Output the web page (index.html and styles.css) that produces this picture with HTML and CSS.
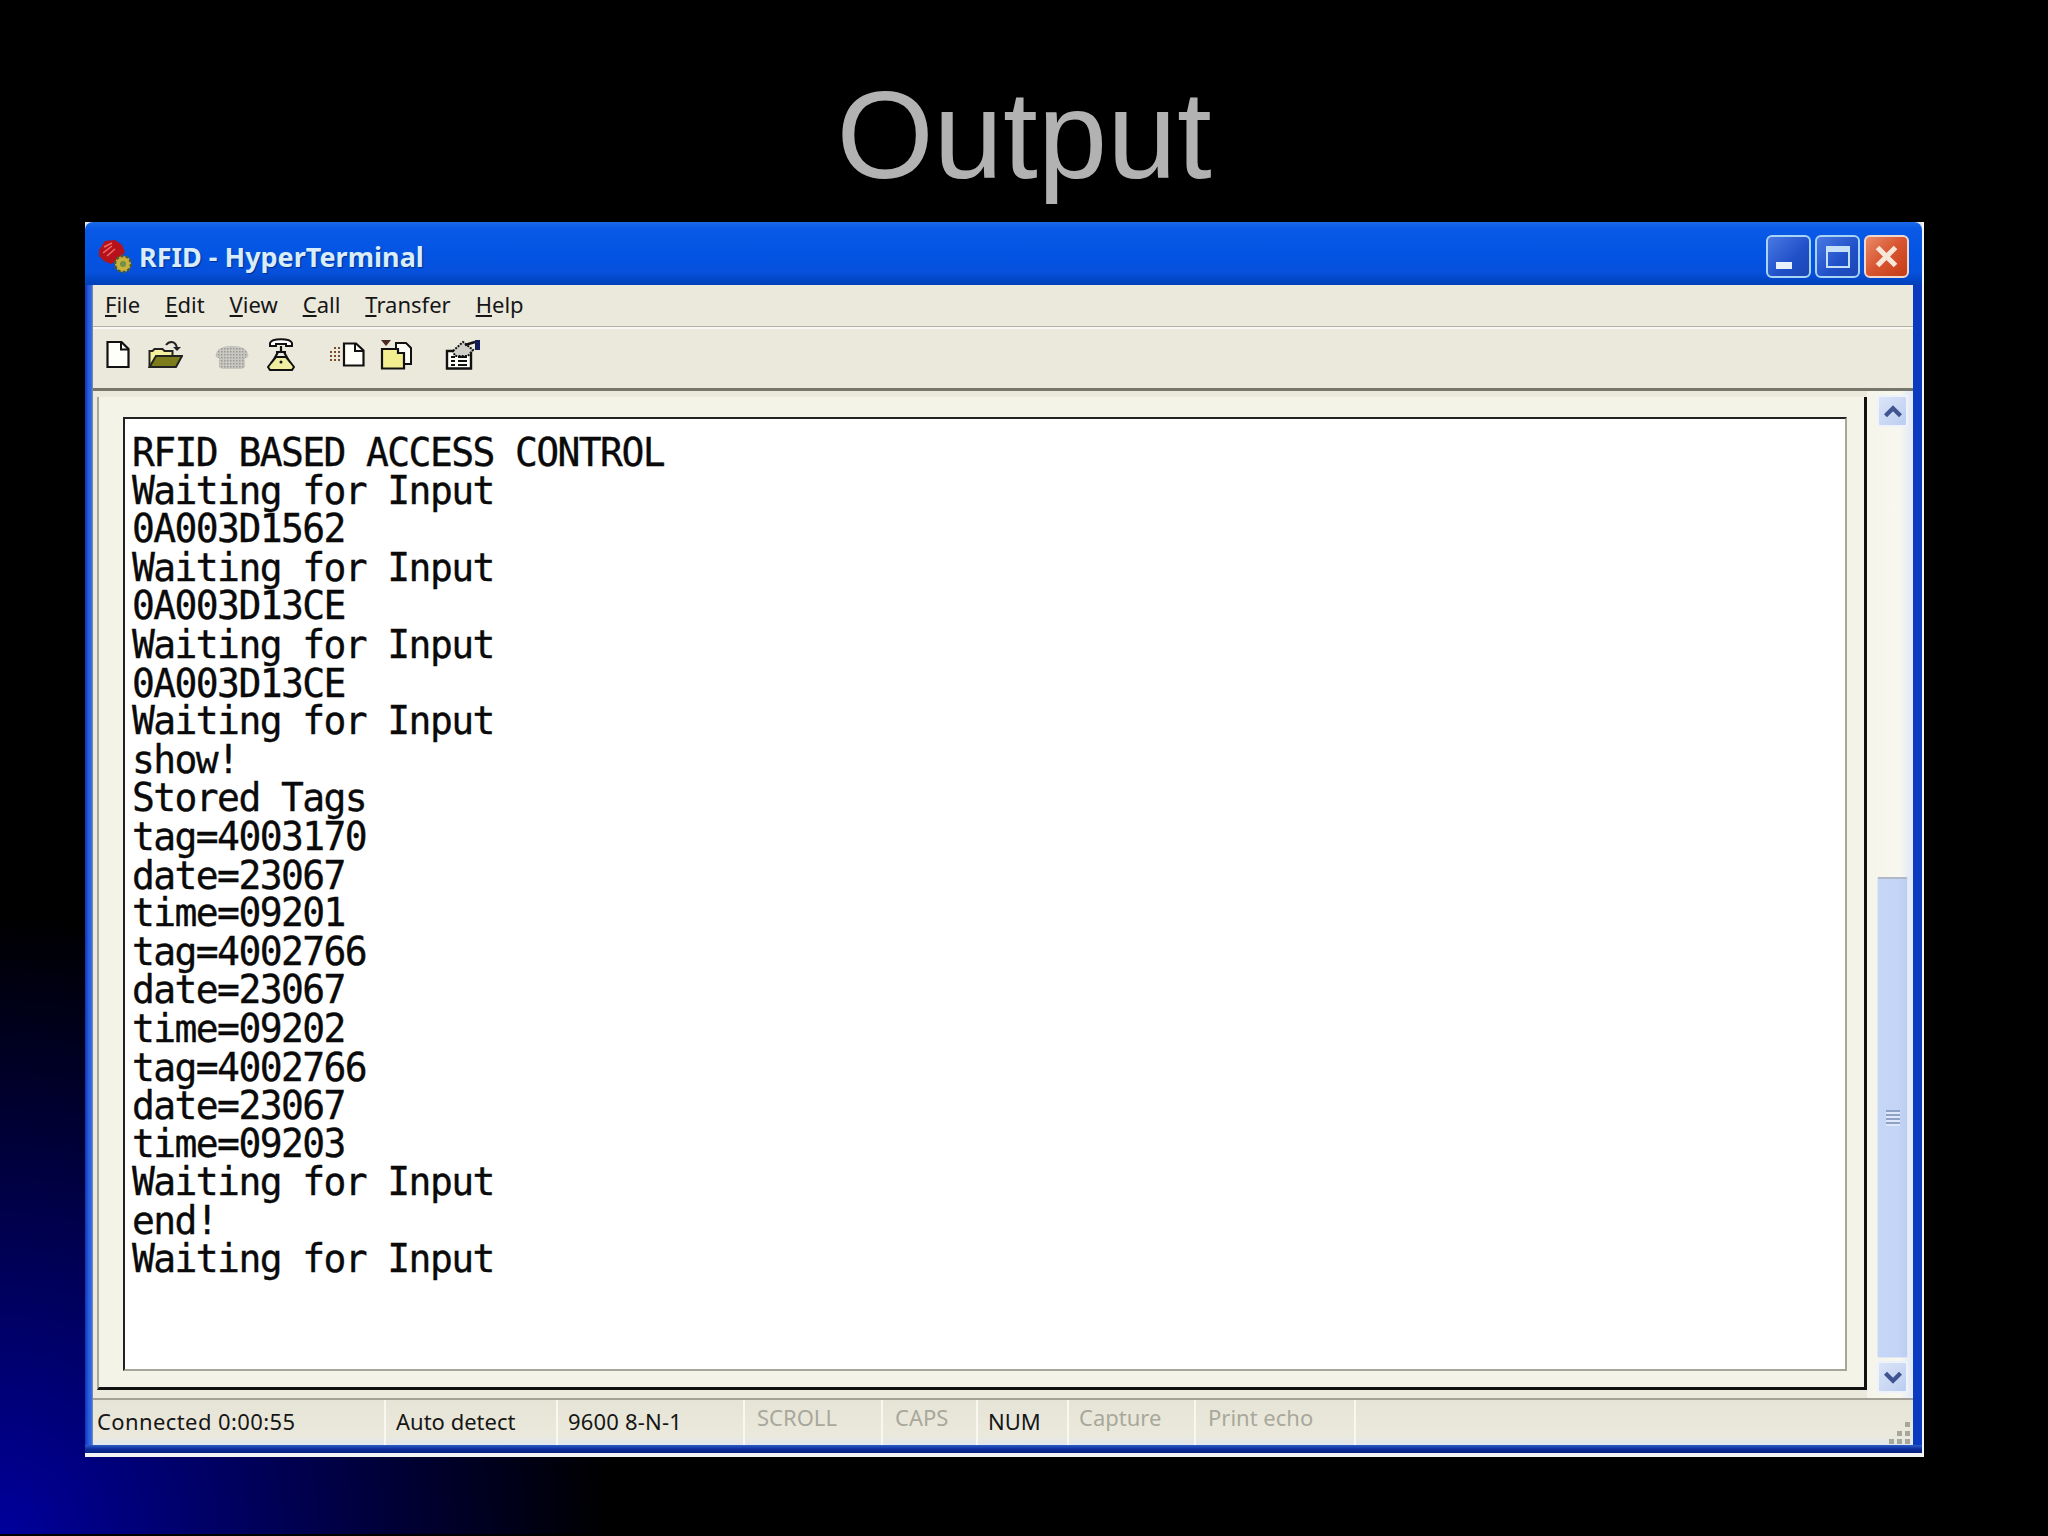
FILE: index.html
```html
<!DOCTYPE html>
<html lang="en">
<head>
<meta charset="utf-8">
<title>Output</title>
<link rel="stylesheet" href="styles.css">
</head>
<body>
<main class="slide">
  <h1 class="slide-title">Output</h1>
  <section class="window">
    <header class="titlebar">
      <svg class="app-icon" viewBox="0 0 36 36" aria-hidden="true">
        <path d="M1 11 7 2l10-1 7 5 3 7-6 7-8 5-7-3-5-5z" fill="#b5121b"/>
        <path d="M6 8l8-4M5 14l9-7M9 17l8-7" stroke="#f26a6a" stroke-width="1.5" fill="none"/>
        <circle cx="25" cy="25" r="8" fill="#c9b13a" stroke="#4a5a3a" stroke-width="2.5" stroke-dasharray="3 2"/>
        <circle cx="25" cy="25" r="3" fill="#6f8f4a"/>
      </svg>
      <span class="title-text">RFID - HyperTerminal</span>
      <div class="title-buttons">
        <div class="tbtn"><span class="glyph-min"></span></div>
        <div class="tbtn"><span class="glyph-max"></span></div>
        <div class="tbtn tbtn-close">
          <svg class="glyph-close" viewBox="0 0 24 24" aria-hidden="true"><path d="M4 4 20 20M20 4 4 20" stroke="#f8e6d8" stroke-width="4.5" fill="none"/></svg>
        </div>
      </div>
    </header>
    <div class="client">
      <nav class="menubar">
        <span><u>F</u>ile</span>
        <span><u>E</u>dit</span>
        <span><u>V</u>iew</span>
        <span><u>C</u>all</span>
        <span><u>T</u>ransfer</span>
        <span><u>H</u>elp</span>
      </nav>
      <div class="toolbar">
        <svg class="ti ti-new" viewBox="0 0 24 28" aria-hidden="true"><path d="M1.500 1.500h14l7 7v18h-21z" fill="#fffffa" stroke="#111" stroke-width="2.200"/><path d="M15 2v7h7" fill="none" stroke="#111" stroke-width="2"/></svg>
        <svg class="ti ti-open" viewBox="0 0 35 29" aria-hidden="true"><path d="M1.500 27V11h3l2-2h8l2 2h8v5" fill="#f4f0a0" stroke="#222" stroke-width="2"/><path d="M1.500 27 8 16h26l-6 11z" fill="#7c7c1c" stroke="#222" stroke-width="2"/><path d="M18 5c3-4 8-4 10 0l1 3" fill="none" stroke="#222" stroke-width="2"/><path d="m25 7 4 4 4-4z" fill="#222"/></svg>
        <svg class="ti ti-hang" viewBox="0 0 34 25" aria-hidden="true"><defs><pattern id="mesh" width="3" height="3" patternUnits="userSpaceOnUse"><rect width="3" height="3" fill="#c8c8c0"/><rect width="1.500" height="1.500" fill="#9a9a94"/></pattern></defs><path d="M1 9c1-5 6-8 16-8s15 3 16 8c1 3-1 4-3 4v9l-3 2H7l-3-2v-9c-2 0-4-1-3-4z" fill="url(#mesh)"/></svg>
        <svg class="ti ti-phone" viewBox="0 0 28 33" aria-hidden="true"><path d="M3 5c2-5 20-5 22 0v3h-6V6H9v2H3z" fill="#fff" stroke="#111" stroke-width="2"/><path d="M14 8v6M9 14h10M11 14 5 25M17 14l6 11" stroke="#111" stroke-width="2.200" fill="none"/><path d="M4 25 9 19h10l5 6 3 4-2 3H3l-2-3z" fill="#f0eca0" stroke="#111" stroke-width="2"/><circle cx="14" cy="24" r="1.500" fill="#111"/></svg>
        <svg class="ti ti-send" viewBox="0 0 36 25" aria-hidden="true"><path d="M1 9h2v2H1zm4 0h2v2H5zm4 0h2v2H9zm-8 4h2v2H1zm4 0h2v2H5zm4 0h2v2H9zm-8 4h2v2H1zm4 0h2v2H5zm4 0h2v2H9zM5 5h2v2H5zm4 0h2v2H9z" fill="#7a4a2a"/><path d="M15 1.500h12l7.500 7v15H15z" fill="#fffffa" stroke="#111" stroke-width="2.200"/><path d="M26 2v7h8" fill="none" stroke="#111" stroke-width="2"/></svg>
        <svg class="ti ti-recv" viewBox="0 0 33 30" aria-hidden="true"><path d="M16 3h10l5 5v16H16z" fill="#fffffa" stroke="#111" stroke-width="2"/><path d="M2 13V9h16v4h6v15.500H2z" fill="#f2ee90" stroke="#111" stroke-width="2.200"/><path d="m1 0 10 0-5 6z" fill="#4a2a20"/></svg>
        <svg class="ti ti-prop" viewBox="0 0 36 31" aria-hidden="true"><path d="M2 12h24v17.500H2z" fill="#fffffa" stroke="#111" stroke-width="2.400"/><path d="M8 12 18 3l10 8-5 6H10z" fill="#cfcfc8" stroke="#111" stroke-width="2" stroke-dasharray="2 1.200"/><path d="M20 6l10-3" stroke="#111" stroke-width="2.400"/><path d="M30 1h5v10h-5z" fill="#141a5a"/><path d="M6 18h4M13 18h9M6 22h4M13 22h9M6 26h4M13 26h9" stroke="#111" stroke-width="1.800"/></svg>
      </div>
      <div class="main">
        <div class="well">
          <div class="terminal"><pre class="screen">RFID BASED ACCESS CONTROL
Waiting for Input
0A003D1562
Waiting for Input
0A003D13CE
Waiting for Input
0A003D13CE
Waiting for Input
show!
Stored Tags
tag=4003170
date=23067
time=09201
tag=4002766
date=23067
time=09202
tag=4002766
date=23067
time=09203
Waiting for Input
end!
Waiting for Input</pre></div>
        </div>
        <aside class="scrollbar">
          <div class="sbtn">
            <svg class="chev" viewBox="0 0 20 14" aria-hidden="true"><path d="M3 11 10 4l7 7" fill="none" stroke="#3f5490" stroke-width="4"/></svg>
          </div>
          <div class="track">
            <div class="thumb"><span class="grip"></span></div>
          </div>
          <div class="sbtn">
            <svg class="chev" viewBox="0 0 20 14" aria-hidden="true"><path d="M3 3l7 7 7-7" fill="none" stroke="#3f5490" stroke-width="4"/></svg>
          </div>
        </aside>
      </div>
      <footer class="status">
        <div class="cell c-conn">Connected 0:00:55</div>
        <div class="cell c-auto">Auto detect</div>
        <div class="cell c-baud">9600 8-N-1</div>
        <div class="cell c-scroll off">SCROLL</div>
        <div class="cell c-caps off">CAPS</div>
        <div class="cell c-num">NUM</div>
        <div class="cell c-cap off">Capture</div>
        <div class="cell c-print off">Print echo</div>
        <div class="cell c-rest">
          <svg class="sizegrip" viewBox="0 0 24 24" aria-hidden="true"><path d="M18 2h5v5h-5zM10 11h5v5h-5zM18 11h5v5h-5zM2 19h5v5H2zM10 19h5v5h-5zM18 19h5v5h-5z" fill="#a8a89a"/></svg>
        </div>
      </footer>
    </div>
  </section>
</main>
</body>
</html>
```

FILE: styles.css
```css
* { box-sizing: border-box; }
html, body { margin: 0; padding: 0; background: #000; }
.slide {
  width: 2048px;
  height: 1536px;
  overflow: hidden;
  background:
    linear-gradient(#000, #000) left bottom / 100% 2px no-repeat,
    radial-gradient(ellipse 610px 620px at 0 1536px, #00009c 0%, #000 100%);
}
.slide-title {
  margin: 0;
  height: 222px;
  padding-top: 60px;
  text-align: center;
  font: 400 125px/150px "Liberation Sans", Arial, sans-serif;
  color: #b2b2b2;
}
.window {
  width: 1839px;
  height: 1235px;
  margin-left: 85px;
  display: flex;
  flex-direction: column;
  background:
    linear-gradient(#dfe6ee, #dfe6ee) left top / 8px 8px no-repeat,
    linear-gradient(#dfe6ee, #dfe6ee) right top / 8px 8px no-repeat,
    linear-gradient(180deg, #2c5cc8 0, #0c2e9c 50%, #062080 100%) left bottom / 100% 8px no-repeat,
    linear-gradient(90deg, #0c34b0 0, #2a60e4 4px, #2a60e4 6px, #8890a8 8px, #0a3ac0 8px);
  border-right: 2px solid #f4f4f4;
  border-bottom: 4px solid #f4f4f4;
  padding: 0 9px 8px 8px;
}
.titlebar {
  height: 63px;
  margin: 0 -9px 0 -8px;
  padding: 6px 13px 0 13px;
  display: flex;
  align-items: center;
  border-radius: 8px 8px 0 0;
  background: linear-gradient(180deg, #1a6ae8 0, #0a5ae6 10%, #0454e4 50%, #0650dc 80%, #0040b8 100%);
}
.app-icon { width: 36px; height: 36px; flex: none; }
.title-text {
  margin-left: 5px;
  font: 700 27px/1 "Noto Sans", "DejaVu Sans", sans-serif;
  color: #d8ecfb;
  text-shadow: 1px 1px 1px #00308c;
}
.title-buttons {
  margin-left: auto;
  display: flex;
  gap: 4px;
}
.tbtn {
  width: 45px;
  height: 43px;
  border: 2px solid #a8d4f4;
  border-radius: 6px;
  background: linear-gradient(135deg, #4a78e4 0, #2050c8 60%, #1c46b4 100%);
  display: flex;
  align-items: center;
  justify-content: center;
}
.tbtn-close {
  border-color: #f0d8cc;
  background: linear-gradient(135deg, #e88a68 0, #d85430 50%, #c43c16 100%);
}
.glyph-min {
  width: 16px;
  height: 7px;
  background: #e8f0fa;
  align-self: flex-end;
  margin: 0 10px 7px 0;
}
.glyph-max {
  width: 24px;
  height: 22px;
  border: 2px solid #c6e0f8;
  border-top-width: 6px;
}
.glyph-close { width: 27px; height: 27px; }
.client {
  flex: 1;
  min-height: 0;
  display: flex;
  flex-direction: column;
  background: #ebe9dc;
  font: 400 22px/1 "Noto Sans", "DejaVu Sans", sans-serif;
  color: #161616;
}
.menubar {
  height: 44px;
  flex: none;
  padding: 0 0 4px 12px;
  display: flex;
  align-items: center;
  gap: 25px;
  border-bottom: 2px solid #f8f8f2;
  box-shadow: inset 0 -1px 0 #b4b2a4;
}
.toolbar {
  height: 59px;
  flex: none;
  padding: 0 0 8px 13px;
  display: flex;
  align-items: center;
}
.ti { flex: none; display: block; }
.ti-new { width: 24px; height: 29px; }
.ti-open { width: 35px; height: 29px; margin-left: 18px; }
.ti-hang { width: 34px; height: 25px; margin-left: 32px; margin-top: 5px; }
.ti-phone { width: 28px; height: 33px; margin-left: 18px; }
.ti-send { width: 36px; height: 25px; margin-left: 34px; }
.ti-recv { width: 33px; height: 30px; margin-left: 15px; }
.ti-prop { width: 36px; height: 31px; margin-left: 32px; }
.main {
  flex: 1;
  min-height: 0;
  display: flex;
  border-top: 3px solid #77766a;
}
.well {
  width: 1770px;
  flex: none;
  margin: 6px 0 8px 4px;
  padding: 20px 17px 16px 24px;
  display: flex;
  background: #f3f3e8;
  border-left: 2px solid #a8a698;
  border-right: 3px solid #111;
  border-bottom: 3px solid #111;
}
.terminal {
  flex: 1;
  min-width: 0;
  background: #fff;
  border-top: 2px solid #222;
  border-left: 2px solid #222;
  border-right: 2px solid #a8a698;
  border-bottom: 2px solid #a8a698;
  padding: 14px 0 0 7px;
}
.screen {
  margin: 0;
  font: 400 38px/36.6px "DejaVu Sans Mono", "Liberation Mono", monospace;
  letter-spacing: -1.6px;
  color: #0a0a0a;
  -webkit-text-stroke: 0.35px #0a0a0a;
  transform: scaleY(1.05);
  transform-origin: 0 0;
}
.scrollbar {
  flex: 1;
  min-width: 0;
  padding: 4px 5px 5px 10px;
  display: flex;
  flex-direction: column;
  background: linear-gradient(90deg, #f4f4ea 0, #f8f8f0 70%, #dfe8f8 100%);
}
.sbtn {
  height: 32px;
  flex: none;
  border: 2px solid #eef2fb;
  border-radius: 3px;
  background: linear-gradient(135deg, #dbe5f8 0, #bccdf0 100%);
  display: flex;
  align-items: center;
  justify-content: center;
}
.chev { width: 22px; height: 15px; }
.track {
  flex: 1;
  min-height: 0;
  display: flex;
  flex-direction: column;
  justify-content: flex-end;
  padding-bottom: 3px;
}
.thumb {
  height: 481px;
  flex: none;
  border: 1px solid #dfe6f4;
  border-top: 2px solid #aeb8c8;
  border-radius: 2px;
  background: linear-gradient(90deg, #c6d6f6 0, #c4d4f6 70%, #bccdf0 100%);
  display: flex;
  align-items: center;
  justify-content: center;
}
.grip {
  width: 14px;
  height: 16px;
  background: repeating-linear-gradient(180deg, #8ea2c8 0, #8ea2c8 2px, #dfe8fa 2px, #dfe8fa 4px);
}
.status {
  height: 47px;
  flex: none;
  display: flex;
  background: linear-gradient(180deg, #e6e4d6 0, #ebe9dc 80%, #dfe6ee 100%);
  border-top: 2px solid #a3a195;
}
.cell {
  flex: none;
  padding-left: 10px;
  padding-top: 10px;
  border-right: 2px solid #f8f8f0;
  white-space: nowrap;
}
.off { color: #a8a89c; padding-top: 6px; }
.c-conn { width: 293px; padding-left: 4px; letter-spacing: 0.4px; }
.c-auto { width: 172px; }
.c-baud { width: 187px; letter-spacing: 0.2px; }
.c-scroll { width: 138px; padding-left: 12px; }
.c-caps { width: 95px; padding-left: 12px; }
.c-num { width: 91px; }
.c-cap { width: 127px; }
.c-print { width: 160px; padding-left: 12px; }
.c-rest {
  flex: 1;
  border-right: 0;
  padding: 0 2px 1px 0;
  display: flex;
  justify-content: flex-end;
  align-items: flex-end;
}
.sizegrip { width: 24px; height: 24px; }
```
